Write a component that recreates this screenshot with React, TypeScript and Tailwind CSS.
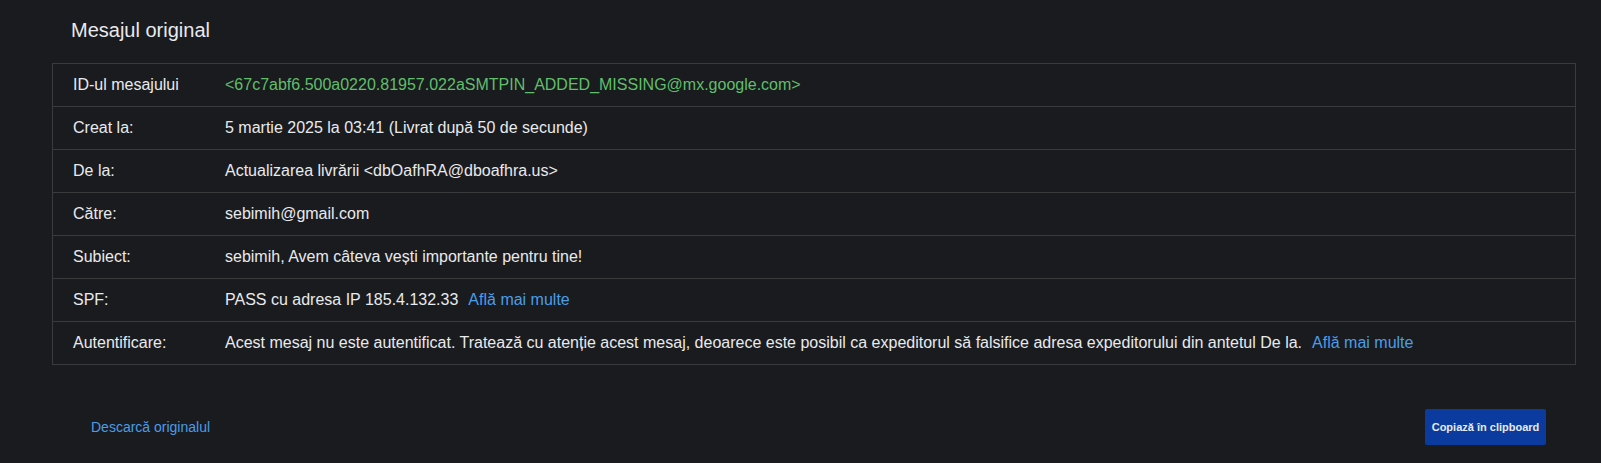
import React from "react";

const rows: { label: string; value: React.ReactNode }[] = [
  {
    label: "ID-ul mesajului",
    value: (
      <span className="text-[#5fbf6a]">
        &lt;67c7abf6.500a0220.81957.022aSMTPIN_ADDED_MISSING@mx.google.com&gt;
      </span>
    ),
  },
  { label: "Creat la:", value: "5 martie 2025 la 03:41 (Livrat după 50 de secunde)" },
  { label: "De la:", value: "Actualizarea livrării <dbOafhRA@dboafhra.us>" },
  { label: "Către:", value: "sebimih@gmail.com" },
  { label: "Subiect:", value: "sebimih, Avem câteva vești importante pentru tine!" },
  {
    label: "SPF:",
    value: (
      <>
        PASS cu adresa IP 185.4.132.33
        <a className="ml-[10px] text-[#4a9de8]">Află mai multe</a>
      </>
    ),
  },
  {
    label: "Autentificare:",
    value: (
      <>
        Acest mesaj nu este autentificat. Tratează cu atenție acest mesaj, deoarece este posibil ca
        expeditorul să falsifice adresa expeditorului din antetul De la.
        <a className="ml-[10px] text-[#4a9de8]">Află mai multe</a>
      </>
    ),
  },
];

export default function App() {
  return (
    <div
      className="min-h-[463px] w-full bg-[#1a1b1e] text-[#e8eaed]"
      style={{ fontFamily: '"Liberation Sans", Arial, sans-serif' }}
    >
      <div className="ml-[52px] mr-[25px] pt-[19px]">
        <h1 className="ml-[19px] text-[20px] leading-[23px] font-normal text-[#e8eaed]">
          Mesajul original
        </h1>
        <div className="mt-[21px] border border-[#3a3b3d]">
          {rows.map((r, i) => (
            <div
              key={i}
              className={
                "flex h-[42px] items-center text-[16px] leading-[18px] " +
                (i < rows.length - 1 ? "box-content border-b border-[#3a3b3d]" : "")
              }
            >
              <div className="w-[172px] shrink-0 pl-[20px]">{r.label}</div>
              <div className="whitespace-nowrap">{r.value}</div>
            </div>
          ))}
        </div>
        <div className="mt-[44px] flex items-center justify-between">
          <a className="ml-[39px] text-[14px] text-[#4a9de8]">Descarcă originalul</a>
          <button className="mr-[30px] h-[36px] w-[121px] rounded-[2px] bg-[#0b3b9e] text-[11px] font-bold text-[#e8eaed]">
            Copiază în clipboard
          </button>
        </div>
      </div>
    </div>
  );
}
